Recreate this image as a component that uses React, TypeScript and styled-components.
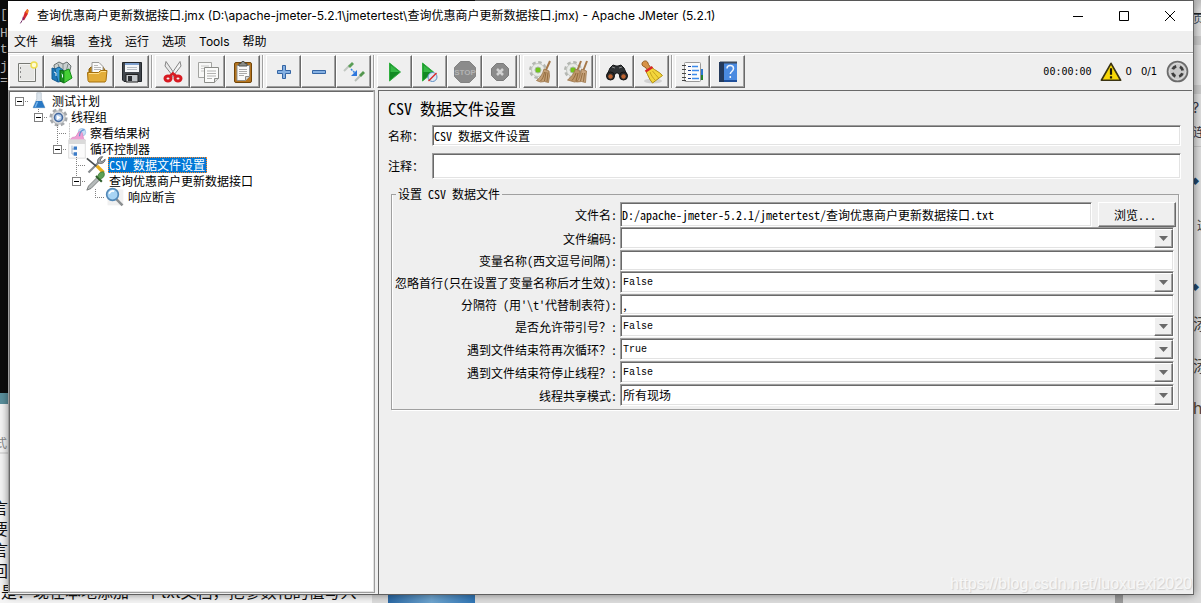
import React from "react";
import styled, { createGlobalStyle, css } from "styled-components";

const SONG = '"Noto Sans Mono CJK SC", "Noto Sans CJK SC", "Liberation Mono", monospace';
const MONO = '"Liberation Mono", "Noto Sans CJK SC", monospace';
const UI = 'Inter, "Noto Sans CJK SC", sans-serif';
const FACE = "#efefef";

const GlobalStyle = createGlobalStyle`
  *, *::before, *::after { box-sizing: border-box; }
  body { margin: 0; background: #e4e4e4; }
  button, input, select { font: inherit; color: inherit; margin: 0; border-radius: 0; }
`;

const sunken = css`
  border: 1px solid;
  border-color: #9d9d9d #fff #fff #9d9d9d;
  box-shadow: inset 1px 1px 0 #696969, inset -1px -1px 0 #e3e3e3;
`;
const raised = css`
  border: 1px solid;
  border-color: #fff #696969 #696969 #fff;
  box-shadow: inset -1px -1px 0 #a0a0a0;
`;

/* ---------- desktop ---------- */

const Desktop = styled.div`
  position: relative;
  display: flex;
  min-height: 100vh;
  padding: 1px 7px 8px 8px;
  overflow: hidden;
  background: #e4e4e4;
`;
const Backdrop = styled.div`
  position: absolute;
  inset: 0;
  overflow: hidden;
  background: linear-gradient(#bdbdbd, #dcdcdc 10px, #dcdcdc);
`;
const Pane = styled.div<{ $x: number; $y: number; $w: number; $h: number; $bg: string }>`
  position: absolute;
  left: ${(p) => p.$x}px;
  top: ${(p) => p.$y}px;
  width: ${(p) => p.$w}px;
  height: ${(p) => p.$h}px;
  background: ${(p) => p.$bg};
`;
const Scrap = styled.span<{ $x: number; $y: number; $size?: number; $color?: string; $font?: string }>`
  position: absolute;
  left: ${(p) => p.$x}px;
  top: ${(p) => p.$y}px;
  font: ${(p) => p.$size ?? 16}px / 20px ${(p) => p.$font ?? UI};
  color: ${(p) => p.$color ?? "#111"};
  white-space: nowrap;
`;

/* ---------- window ---------- */

const Window = styled.main`
  position: relative;
  flex: 1;
  min-width: 0;
  display: flex;
  flex-direction: column;
  background: ${FACE};
  border-right: 1px solid #6a6a6a;
  border-bottom: 1px solid #5f5f5f;
  box-shadow: 0 0 8px rgba(0, 0, 0, 0.45);
`;
const TitleBar = styled.header`
  display: flex;
  align-items: center;
  height: 30px;
  padding-left: 8px;
  background: #fff;
  font: 12px/30px ${UI};
  color: #000;
`;
const TitleText = styled.h1`
  flex: 1;
  margin: 0 0 0 6px;
  font: inherit;
  white-space: nowrap;
`;
const CaptionButton = styled.button`
  display: flex;
  align-items: center;
  justify-content: center;
  width: 46px;
  height: 30px;
  padding: 0;
  border: 0;
  background: transparent;
`;
const MenuBar = styled.nav`
  display: flex;
  gap: 13px;
  height: 22px;
  padding-left: 6px;
  border-bottom: 1px solid #a0a0a0;
`;
const MenuItem = styled.button`
  padding: 0;
  border: 0;
  background: transparent;
  font: 12px/20px ${UI};
  color: #000;
`;
const Toolbar = styled.div`
  display: flex;
  align-items: center;
  height: 36px;
  padding-left: 1px;
  border-top: 1px solid #fff;
`;
const ToolGroup = styled.div`
  display: flex;
  & + & {
    margin-left: 2px;
    padding-left: 3px;
    border-left: 1px solid #a0a0a0;
    box-shadow: inset 1px 0 0 #fff;
  }
`;
const ToolButton = styled.button`
  display: flex;
  align-items: center;
  justify-content: center;
  width: 35px;
  height: 33px;
  padding: 0;
  background: ${FACE};
  ${raised}
`;
const Status = styled.div`
  display: flex;
  align-items: center;
  margin-left: auto;
  padding-right: 4px;
  font: 10px/16px "DejaVu Sans", sans-serif;
  color: #000;
`;
const Clock = styled.span`
  margin-right: 8px;
  font: 10px/16px "DejaVu Sans Mono", monospace;
`;
const Count = styled.span`
  margin-left: 4px;
`;
const Ratio = styled.span`
  margin: 0 9px;
`;

const Body = styled.div`
  flex: 1;
  display: flex;
  min-height: 0;
  padding: 1px 1px 0 0;
`;
const TreePane = styled.section`
  width: 367px;
  flex: none;
  margin: 0 3px 1px 0;
  padding: 1px 0 0 0;
  background: #fff;
  border: 2px solid;
  border-color: #696969 #e3e3e3 #e3e3e3 #696969;
  outline: 1px solid #9d9d9d;
  outline-offset: -1px;
`;
const Editor = styled.section`
  flex: 1;
  min-width: 0;
  padding: 7px 11px 8px 9px;
  border-left: 1px solid #696969;
  border-top: 1px solid #696969;
  font: 12px/16px ${SONG};
  color: #000;
`;

/* ---------- tree ---------- */

const TreeRow = styled.div`
  display: flex;
  align-items: center;
  height: 16px;
`;
const Guide = styled.svg`
  display: block;
  flex: none;
  width: 19px;
  height: 16px;
  shape-rendering: crispEdges;
`;
const Toggle = styled.button`
  display: block;
  flex: none;
  width: 19px;
  height: 16px;
  padding: 0;
  border: 0;
  background: transparent;
`;
const NodeIcon = styled.span`
  display: flex;
  align-items: center;
  justify-content: center;
  flex: none;
  width: 20px;
  height: 16px;
  margin-right: 2px;
`;
const NodeLabel = styled.span<{ $selected?: boolean }>`
  padding: 0 2px 0 1px;
  font: 12px/16px ${SONG};
  white-space: nowrap;
  color: ${(p) => (p.$selected ? "#fff" : "#000")};
  background: ${(p) => (p.$selected ? "#0078d7" : "transparent")};
  outline: ${(p) => (p.$selected ? "1px dotted #ff8728" : "none")};
  outline-offset: -1px;
`;

/* ---------- form ---------- */

const Heading = styled.h2`
  margin: 0 0 7px;
  font: 16px/20px ${SONG};
`;
const TopRow = styled.div<{ $h: number }>`
  display: flex;
  align-items: center;
  height: ${(p) => p.$h}px;
  margin-bottom: 7px;
  label { width: 44px; flex: none; }
`;
const TextInput = styled.input`
  flex: 1;
  min-width: 0;
  height: 100%;
  padding: 0 1px;
  background: #fff;
  outline: none;
  ${sunken}
`;
const Group = styled.fieldset`
  margin: 0 2px 0 3px;
  padding: 0 4px 2px 3px;
  min-width: 0;
  border: 1px solid #a0a0a0;
  box-shadow: 1px 1px 0 #fff, inset 1px 0 0 #fff;
  legend { margin-left: 1px; padding: 0 2px; line-height: 16px; }
`;
const Row = styled.div<{ $h: number }>`
  display: flex;
  align-items: center;
  height: ${(p) => p.$h}px;
  & > label {
    flex: none;
    width: 222px;
    margin-right: 3px;
    text-align: right;
    white-space: nowrap;
  }
`;
const BrowseButton = styled.button`
  width: 78px;
  height: 25px;
  margin: 0 -2px 0 6px;
  padding: 0 4px 0 0;
  background: ${FACE};
  ${raised}
`;
const ComboBox = styled.div`
  position: relative;
  flex: 1;
  height: 22px;
  align-self: flex-start;
`;
const ComboSelect = styled.select<{ $latin?: boolean }>`
  appearance: none;
  width: 100%;
  height: 100%;
  padding: ${(p) => (p.$latin ? 2 : 0)}px 24px 0 2px;
  background: #fff;
  outline: none;
  font: ${(p) => (p.$latin ? `10px/16px ${MONO}` : `12px/16px ${SONG}`)};
  ${sunken}
`;
const ComboArrow = styled.span`
  position: absolute;
  top: 2px;
  right: 1px;
  bottom: 1px;
  width: 19px;
  display: flex;
  align-items: center;
  justify-content: center;
  background: ${FACE};
  pointer-events: none;
  ${raised}
`;
const Watermark = styled.div`
  position: absolute;
  right: 1px;
  bottom: 0;
  font: 16px/20px "Liberation Sans", sans-serif;
  color: #f7f7f7;
  text-shadow: 1px 1px 1px #cfcfcf;
`;

/* ---------- icons ---------- */

const Svg = ({ s = 24, children }: { s?: number; children: React.ReactNode }) => (
  <svg width={s} height={s} viewBox="0 0 24 24" fill="none" aria-hidden="true">
    {children}
  </svg>
);

const NewIcon = () => (
  <Svg>
    <path d="M3.500 3.500h17v18h-17z" fill="#f3f3f1" stroke="#777974" />
    <path d="M5 5h14v15H5z" fill="#e6e6e4" />
    <path d="M5.500 7v2M5.500 11v2M5.500 16v2" stroke="#888" />
    <circle cx="19" cy="5" r="3" fill="#fffbd0" stroke="#eddc50" strokeWidth="1.500" />
  </Svg>
);
const TemplatesIcon = () => (
  <Svg>
    <path d="M4 5l5-3 4 2 4-2 4 4-2 8H5z" fill="#c9d0d0" stroke="#687070" />
    <path d="M8 4l3 8M13 4v8M18 4l-2 8" stroke="#7e8888" />
    <path d="M2 8l6 2v12l-6-3z" fill="#1d78b8" stroke="#145a90" />
    <path d="M5 9l4-2 4 3v11l-5 1z" fill="#3597d3" stroke="#145a90" />
    <path d="M10 10l4 1v12l-4-2z" fill="#1b8e22" stroke="#0d6414" />
    <path d="M14 11l5-2 3 9-8 5z" fill="#45cf35" stroke="#168a1b" />
    <path d="M4 12l2 1v3M11.500 14l1 .5v3" stroke="#e8f6ff" />
  </Svg>
);
const OpenIcon = () => (
  <Svg>
    <path d="M4 20V9l2-2h12l2 3v10z" fill="#b98013" stroke="#8b5f0c" />
    <path d="M7 14V2.500h7l4 4V14z" fill="#fafafa" stroke="#9a9a98" />
    <path d="M9 5.500h4M9 7.500h7M9 9.500h7" stroke="#b8b8b8" />
    <path d="M2.500 12.500h11l2-2h6.500l-1 10-1 1.500H4l-1-1.500z" fill="#e3ad38" stroke="#a5700d" />
    <path d="M4 13.500h10l2-2h5" stroke="#ffdf8a" />
  </Svg>
);
const SaveIcon = () => (
  <Svg>
    <path d="M2.500 2.500h19v19H4l-1.500-1.500z" fill="#41464c" stroke="#23272b" />
    <path d="M5 3h14v9H5z" fill="#f4f6f8" />
    <path d="M5 3h14v2H5z" fill="#7d9fce" />
    <path d="M7 7.500h10M7 9.500h10" stroke="#b6bcc4" />
    <path d="M6 14.500h12V22H6z" fill="#c4c8cb" stroke="#202020" />
    <path d="M8 16h4v5H8z" fill="#2b2e32" />
  </Svg>
);
const CutIcon = () => (
  <Svg>
    <path d="M5 1.500L15 16l-2 1.500L4 6z" fill="#e9e9e9" stroke="#858585" />
    <path d="M19 1.500L9 16l2 1.500L20 6z" fill="#f4f4f4" stroke="#858585" />
    <ellipse cx="7" cy="18.500" rx="3" ry="2.500" stroke="#d81a22" strokeWidth="3" />
    <ellipse cx="17" cy="18.500" rx="3" ry="2.500" stroke="#d81a22" strokeWidth="3" />
    <path d="M9 16l3-2.500 3 2.500" stroke="#d81a22" strokeWidth="2.500" />
  </Svg>
);
const CopyIcon = () => (
  <Svg>
    <path d="M2.500 2.500h13v15h-13z" fill="#f8f8f7" stroke="#a2a3a0" />
    <path d="M5 6h8M5 8.500h8M5 11h8" stroke="#c6c6c4" />
    <path d="M8.500 7.500h14v11l-4 4h-10z" fill="#fbfbfa" stroke="#8b8c88" />
    <path d="M11 11h9M11 13.500h9M11 16h9M11 18.500h5" stroke="#b2b2b0" />
    <path d="M22.500 18.500h-4v4" fill="#ddd" stroke="#8b8c88" />
  </Svg>
);
const PasteIcon = () => (
  <Svg>
    <rect x="3.500" y="2.500" width="17" height="20" rx="1.500" fill="#b4741f" stroke="#714509" />
    <path d="M6 5.500h12.500v11l-4 4H6z" fill="#fafafa" stroke="#92928e" />
    <path d="M8 9.500h8M8 11.500h8M8 13.500h8M8 15.500h5" stroke="#aaa" />
    <path d="M8 6V3.500h2L11 1.500h2l1 2h2V6z" fill="#8b8d88" stroke="#4f514d" />
    <path d="M18.500 16.500h-4v4" fill="#d8d8d8" stroke="#8a8a88" />
  </Svg>
);
const PlusIcon = () => (
  <Svg>
    <path d="M10.500 5.500h3v5h5v3h-5v5h-3v-5h-5v-3h5z" fill="#85b0e2" stroke="#3465a4" />
  </Svg>
);
const MinusIcon = () => (
  <Svg>
    <path d="M5.500 10.500h13v3h-13z" fill="#85b0e2" stroke="#3465a4" />
  </Svg>
);
const ToggleIcon = () => (
  <Svg>
    <path d="M2 11l6-6" stroke="#c2c8c2" strokeWidth="2" />
    <path d="M6 6l4-4 2 2-4 4z" fill="#5a9e56" />
    <path d="M13 21l6-6" stroke="#b8beb8" strokeWidth="2" />
    <path d="M17 15l4-4 2 2-4 4z" fill="#54974f" />
    <path d="M9 9l4 4" stroke="#3886e4" strokeWidth="1.500" strokeDasharray="2 1" />
    <path d="M15 10v6H9z" fill="#2f78dd" />
  </Svg>
);
const StartIcon = () => (
  <Svg>
    <path d="M6.500 3l11 9-11 9z" fill="#128a24" stroke="#2fae3e" />
    <path d="M7.500 5l9 7h-9z" fill="#35b845" />
  </Svg>
);
const NoPauseIcon = () => (
  <Svg>
    <path d="M4.500 3l11 9-11 9z" fill="#128a24" stroke="#2fae3e" />
    <path d="M5.500 5l9 7h-9z" fill="#35b845" />
    <circle cx="14.500" cy="17" r="4.500" fill="#dde8f4" stroke="#5d8fc4" />
    <path d="M10.500 21l8-8" stroke="#dc2a2a" strokeWidth="1.500" />
  </Svg>
);
const StopIcon = () => (
  <Svg>
    <path d="M7.500 1.500h9l6 6v9l-6 6h-9l-6-6v-9z" fill="#8b8b8b" stroke="#828282" />
    <text x="12" y="15" textAnchor="middle" fontFamily="Liberation Sans, sans-serif" fontSize="8" fontWeight="700" fill="#b4b4b4">
      STOP
    </text>
  </Svg>
);
const ShutdownIcon = () => (
  <Svg>
    <path d="M8.500 3.500h7l5 5v7l-5 5h-7l-5-5v-7z" fill="#8b8b8b" stroke="#7b7b7b" />
    <path d="M9 9l6 6M15 9l-6 6" stroke="#d2d2d2" strokeWidth="2.500" />
  </Svg>
);
const Gear = () => (
  <>
    <circle cx="9" cy="10" r="7.500" stroke="#b4b7b2" strokeWidth="3" strokeDasharray="3.400 2.490" />
    <circle cx="9" cy="10" r="6.500" fill="#e9ebe8" stroke="#c4c7c2" />
    <circle cx="9" cy="10" r="3" fill="#72c51d" stroke="#a9b8a0" />
  </>
);
const ClearIcon = () => (
  <Svg>
    <Gear />
    <path d="M21 1l-4 9" stroke="#a5784a" strokeWidth="2" />
    <path d="M15 9l5 2 .5 5-1 6.500-4-1-4 .5-4-1.500c4-3 6-6 7.500-11.500z" fill="#c39f76" stroke="#9b7448" strokeWidth=".8" />
    <path d="M15.500 12c-.5 4-2 7-4 9M17 12l-1.500 9M19 12.500l-1 9" stroke="#86602f" strokeWidth=".8" />
  </Svg>
);
const ClearAllIcon = () => (
  <Svg>
    <Gear />
    <path d="M17 1l-3.500 9M23 1l-3.500 9" stroke="#a5784a" strokeWidth="2" />
    <path d="M11.500 9l4.500 2-.5 10-5 1-7-2c4-3 6-6 8-11z" fill="#bd966a" stroke="#9b7448" strokeWidth=".8" />
    <path d="M17.500 9l5 2-.5 5-.5 6.500-4-1-5 .5c3-3 4-7 5-13z" fill="#c8a580" stroke="#9b7448" strokeWidth=".8" />
    <path d="M12 13c-1 3-2 5-4 7.500M14 13l-2 8M18.500 13l-2 8M20.500 13l-1 8.500" stroke="#86602f" strokeWidth=".8" />
  </Svg>
);
const SearchIcon = () => (
  <Svg>
    <path d="M5 8l3-3 3 1h2l3-1 3 3 3 7-5 3-4-5h-2l-4 5-5-3z" fill="#2f3234" stroke="#17191a" />
    <path d="M7 7l3 1M17 7l-3 1" stroke="#888" />
    <circle cx="5.500" cy="16" r="4" fill="#292b2c" stroke="#121212" />
    <circle cx="18.500" cy="16" r="4" fill="#292b2c" stroke="#121212" />
    <circle cx="5.500" cy="16.500" r="2.200" fill="#bd6330" />
    <circle cx="18.500" cy="16.500" r="2.200" fill="#bd6330" />
  </Svg>
);
const BroomIcon = () => (
  <Svg>
    <ellipse cx="13" cy="21" rx="9" ry="2.500" fill="#d2d2d2" />
    <path d="M2 4c0-3 4-4 5.500-2l1 2.500L11 8l-3.500 2L5 7C3 6.500 2 5.500 2 4z" fill="#d79347" stroke="#946021" />
    <path d="M12 7.500c3 3 7 4 10.500 8l-10 7.500C9 19 8 15 6 11.500z" fill="#f3d63c" stroke="#b08e12" />
    <path d="M10 12c1 3 3 6 5 8M12.500 11c2 2 4 5 6 7" stroke="#c6a31f" />
    <path d="M5.500 11.500l7-4.500" stroke="#d72828" strokeWidth="2.500" />
  </Svg>
);
const HelperIcon = () => (
  <Svg>
    <path d="M19 9h3v6h-3z" fill="#2a78d0" />
    <path d="M19 15h3v5h-3z" fill="#22812c" />
    <rect x="3.500" y="2.500" width="16" height="19" rx="1" fill="#fbfbfb" stroke="#999" />
    <path d="M1 5.500h4M1 9.500h4M1 13.500h4M1 17.500h4M1 20.500h4" stroke="#444" />
    <path d="M7 6.500h3M7 10.500h3M7 14.500h3M7 18.500h3" stroke="#1d3e8c" />
    <path d="M11 6.500h6M11 10.500h7M11 14.500h5M11 18.500h7" stroke="#3a8aec" strokeWidth="1.500" />
  </Svg>
);
const HelpIcon = () => (
  <Svg>
    <path d="M3 2h18v20H3z" fill="#4a8ae0" />
    <path d="M4 1.500h17v2H4z" fill="#3d4a5c" />
    <path d="M3 2h5v20H3z" fill="#243a5c" />
    <path d="M8 21h13" stroke="#1f4f9a" strokeWidth="2" />
    <path d="M11 8.500c0-4 6.500-4 6.500 0 0 3-3.200 3-3.200 5.500M14.300 16v2" stroke="#eef5ff" strokeWidth="1.500" />
  </Svg>
);
const WarningIcon = () => (
  <Svg s={22}>
    <path d="M12 2.500L22.500 21h-21z" fill="#f8d808" stroke="#3b3412" strokeWidth="1.800" strokeLinejoin="round" />
    <path d="M12 8v7M12 16.500V19" stroke="#1c1a0a" strokeWidth="2.400" />
  </Svg>
);
const ThreadsIcon = () => (
  <Svg s={23}>
    <circle cx="12" cy="12" r="10.500" fill="#adadad" stroke="#6a6a6a" strokeWidth="1.600" />
    <circle cx="12" cy="12" r="8.500" fill="#c9c9c9" stroke="#dedede" />
    <circle cx="12" cy="12" r="5.500" stroke="#3e3e3e" strokeWidth="3" strokeDasharray="4.600 4.040" strokeDashoffset="-2" />
  </Svg>
);
const FeatherIcon = () => (
  <Svg s={15}>
    <path d="M10 17L14 5l4-5 2 2-1 6-6 10z" fill="#d7262c" />
    <path d="M15 5l3-5 2 2-1 6z" fill="#ef7a22" />
    <path d="M10 17l1-5 3 3-2 3z" fill="#8b2568" />
    <path d="M10 18l-3 5" stroke="#6b2360" strokeWidth="1.500" />
  </Svg>
);

const FlaskIcon = () => (
  <Svg s={18}>
    <path d="M9 1h6v8l5 12H4L9 9z" fill="#dbe4ec" stroke="#b5c0cb" />
    <path d="M8 12h8l4 9H4z" fill="#2878c4" />
    <path d="M10 13l-3 7" stroke="#76b4ec" strokeWidth="2" />
  </Svg>
);
const GearIcon = () => (
  <Svg s={19}>
    <circle cx="12" cy="12" r="9.500" stroke="#a5a8ab" strokeWidth="4" strokeDasharray="4.500 2.960" />
    <circle cx="12" cy="12" r="8.500" fill="#d6d8da" stroke="#aaadb0" />
    <circle cx="12" cy="12" r="5" fill="#b7d0ef" stroke="#44699f" strokeWidth="2" />
    <path d="M10 9l5 3-5 3z" fill="#fff" />
  </Svg>
);
const ResultsIcon = () => (
  <Svg s={20}>
    <path d="M3 0v21h18" stroke="#bbb" strokeDasharray="2 1" />
    <circle cx="18" cy="11" r="4.500" fill="#c9dff5" stroke="#9fc0e6" />
    <path d="M4 21c2-7 5-1 8-7s6-5 7 1 2 4 3 6z" fill="#ef9fd4" stroke="#d987c0" />
    <path d="M15 16c0-5 3-8 6-8" stroke="#5b93d4" strokeWidth="1.500" />
  </Svg>
);
const LoopIcon = () => (
  <Svg s={20}>
    <path d="M2 1h20v22H2z" fill="#fbfbfb" stroke="#d8d8d8" />
    <path d="M2 1h20v5H2z" fill="#dadada" />
    <path d="M6 8v10h3M6 12h3" stroke="#8fa6c4" />
    <path d="M8 9h4v4H8zM8 16h4v4H8z" fill="#3a7bc8" />
  </Svg>
);
const ToolsIcon = () => (
  <Svg s={20}>
    <path d="M3 21L16 8" stroke="#85898c" strokeWidth="2.500" />
    <path d="M14 9c-1-4 2-7 6-7l-3 4 2 2 4-3c0 4-4 6-7 5z" fill="#9ca0a3" stroke="#5a5e62" />
    <path d="M1 4l12 10" stroke="#4a4e50" strokeWidth="2" />
    <path d="M13 13l8 8" stroke="#e9ae1c" strokeWidth="4" />
  </Svg>
);
const SamplerIcon = () => (
  <Svg s={20}>
    <path d="M1 23l2-5L13 8l3 3L6 21z" fill="#b5baba" stroke="#6c7070" />
    <path d="M12 6l7 7" stroke="#2c5c2a" strokeWidth="2.500" />
    <path d="M14 7c1-5 4-6 7-6 2 3 1 7-4 9z" fill="#5ea154" stroke="#39732f" />
  </Svg>
);
const AssertIcon = () => (
  <Svg s={20}>
    <path d="M3 3h19v19H3z" fill="#f0f0f0" />
    <path d="M13 14l8 8" stroke="#8a8e90" strokeWidth="3" />
    <circle cx="9" cy="9" r="7" fill="#a8d4f4" stroke="#5389b8" strokeWidth="2" />
    <path d="M5 8c1-3 4-4 6-3" stroke="#fff" strokeWidth="2" />
  </Svg>
);

/* ---------- data ---------- */

type Kind = "blank" | "tee" | "end" | "open";
interface TreeItem {
  label: string;
  guides: Kind[];
  icon: React.ReactNode;
  selected?: boolean;
}

const TREE: TreeItem[] = [
  { label: "测试计划", guides: ["open"], icon: <FlaskIcon /> },
  { label: "线程组", guides: ["blank", "open"], icon: <GearIcon /> },
  { label: "察看结果树", guides: ["blank", "blank", "tee"], icon: <ResultsIcon /> },
  { label: "循环控制器", guides: ["blank", "blank", "open"], icon: <LoopIcon /> },
  { label: "CSV 数据文件设置", guides: ["blank", "blank", "blank", "tee"], icon: <ToolsIcon />, selected: true },
  { label: "查询优惠商户更新数据接口", guides: ["blank", "blank", "blank", "open"], icon: <SamplerIcon /> },
  { label: "响应断言", guides: ["blank", "blank", "blank", "blank", "end"], icon: <AssertIcon /> },
];

const TOOLS: [string, () => React.JSX.Element][][] = [
  [["新建", NewIcon], ["模板", TemplatesIcon], ["打开", OpenIcon], ["保存", SaveIcon]],
  [["剪切", CutIcon], ["复制", CopyIcon], ["粘贴", PasteIcon]],
  [["展开", PlusIcon], ["折叠", MinusIcon], ["切换", ToggleIcon]],
  [["启动", StartIcon], ["不停顿开始", NoPauseIcon], ["停止", StopIcon], ["关闭", ShutdownIcon]],
  [["清除", ClearIcon], ["清除全部", ClearAllIcon]],
  [["查找", SearchIcon], ["重置查找", BroomIcon]],
  [["函数助手", HelperIcon], ["帮助", HelpIcon]],
];

const GuideCell = ({ kind, first }: { kind: Kind; first: boolean }) => {
  const dots = { stroke: "#808080", strokeDasharray: "1 1" };
  if (kind === "open")
    return (
      <Toggle aria-label="折叠节点">
        <Guide viewBox="0 0 19 16" fill="none">
          {!first && <path d="M9.500 0V4" {...dots} />}
          <path d="M15 8.500h4" {...dots} />
          <path d="M5.500 4.500h8v8h-8z" fill="#fff" stroke="#808080" />
          <path d="M7 8.500h5" stroke="#000" />
        </Guide>
      </Toggle>
    );
  return (
    <Guide viewBox="0 0 19 16" fill="none" aria-hidden="true">
      {kind === "tee" && <path d="M9.500 0v16" {...dots} />}
      {kind === "end" && <path d="M9.500 0v8" {...dots} />}
      {kind !== "blank" && <path d="M9 8.500h10" {...dots} />}
    </Guide>
  );
};

const Combo = ({ id, label, value, latin }: { id: string; label: string; value: string; latin?: boolean }) => (
  <Row $h={23}>
    <label htmlFor={id}>{label}</label>
    <ComboBox>
      <ComboSelect id={id} $latin={latin} defaultValue={value}>
        <option value={value}>{value}</option>
      </ComboSelect>
      <ComboArrow>
        <svg width="9" height="5" viewBox="0 0 9 5" aria-hidden="true">
          <path d="M0 0h9L4.500 5z" fill="#696969" />
        </svg>
      </ComboArrow>
    </ComboBox>
  </Row>
);

const Field = ({ id, label, value }: { id: string; label: string; value: string }) => (
  <Row $h={21}>
    <label htmlFor={id}>{label}</label>
    <TextInput id={id} defaultValue={value} />
  </Row>
);

export default function App() {
  return (
    <>
      <GlobalStyle />
      <Desktop>
        <Backdrop aria-hidden="true">
          <Pane $x={0} $y={0} $w={475} $h={394} $bg="#0c0c0c" />
          <Pane $x={475} $y={0} $w={719} $h={2} $bg="#6e6e6e" />
          <Pane $x={0} $y={393} $w={9} $h={11} $bg="#5a8f9c" />
          <Pane $x={0} $y={404} $w={372} $h={199} $bg="#f4f4f4" />
          <Pane $x={0} $y={452} $w={9} $h={2} $bg="#dcdcdc" />
          <Pane $x={388} $y={594} $w={87} $h={9} $bg="linear-gradient(90deg,#2a68a4,#6fa5cf 50%,#2f74b4)" />
          <Pane $x={1115} $y={594} $w={8} $h={9} $bg="#9a9a9a" />
          <Pane $x={1193} $y={13} $w={8} $h={1} $bg="#222" />
          <Pane $x={1193} $y={36} $w={8} $h={9} $bg="#c8c8c8" />
          <Pane $x={1193} $y={85} $w={8} $h={9} $bg="#c8c8c8" />
          <Pane $x={1193} $y={146} $w={8} $h={1} $bg="#c4c4c4" />
          <Scrap $x={0} $y={5} $size={13} $color="#bbb" $font={MONO}>[</Scrap>
          <Scrap $x={0} $y={24} $size={13} $color="#bbb" $font={MONO}>H</Scrap>
          <Scrap $x={0} $y={40} $size={13} $color="#bbb" $font={MONO}>t</Scrap>
          <Scrap $x={0} $y={57} $size={13} $color="#bbb" $font={MONO}>j</Scrap>
          <Scrap $x={0} $y={71} $size={13} $color="#bbb" $font={MONO}>=</Scrap>
          <Scrap $x={-5} $y={434} $size={12} $color="#888">式</Scrap>
          <Scrap $x={-8} $y={498}>言</Scrap>
          <Scrap $x={-8} $y={519}>要</Scrap>
          <Scrap $x={-8} $y={540}>言</Scrap>
          <Scrap $x={-8} $y={561}>回</Scrap>
          <Scrap $x={1} $y={582}>是：现在本地添加一个txt文档，把参数化的值写入</Scrap>
          <Scrap $x={1193} $y={9} $size={11} $color="#345">页</Scrap>
          <Scrap $x={1192} $y={98} $size={14} $color="#334">?</Scrap>
          <Scrap $x={1193} $y={123} $size={12} $color="#334">连</Scrap>
          <Scrap $x={1191} $y={171} $size={8} $color="#246">◆</Scrap>
          <Scrap $x={1197} $y={216} $size={12} $color="#444">这</Scrap>
          <Scrap $x={1191} $y={277} $size={8} $color="#246">◆</Scrap>
          <Scrap $x={1193} $y={314} $color="#444">添</Scrap>
          <Scrap $x={1193} $y={356} $color="#444">添</Scrap>
          <Scrap $x={1193} $y={398} $color="#543">h</Scrap>
        </Backdrop>

        <Window>
          <TitleBar>
            <FeatherIcon />
            <TitleText>查询优惠商户更新数据接口.jmx (D:\apache-jmeter-5.2.1\jmetertest\查询优惠商户更新数据接口.jmx) - Apache JMeter (5.2.1)</TitleText>
            <CaptionButton aria-label="最小化">
              <svg width="10" height="10" viewBox="0 0 10 10"><path d="M0 5.500h10" stroke="#000" /></svg>
            </CaptionButton>
            <CaptionButton aria-label="最大化">
              <svg width="10" height="10" viewBox="0 0 10 10"><path d="M.5.500h9v9h-9z" fill="none" stroke="#000" /></svg>
            </CaptionButton>
            <CaptionButton aria-label="关闭窗口">
              <svg width="10" height="10" viewBox="0 0 10 10"><path d="M0 0l10 10M10 0L0 10" stroke="#000" /></svg>
            </CaptionButton>
          </TitleBar>

          <MenuBar>
            {["文件", "编辑", "查找", "运行", "选项", "Tools", "帮助"].map((m) => (
              <MenuItem key={m}>{m}</MenuItem>
            ))}
          </MenuBar>

          <Toolbar>
            {TOOLS.map((group, i) => (
              <ToolGroup key={i}>
                {group.map(([name, Icon]) => (
                  <ToolButton key={name} aria-label={name}>
                    <Icon />
                  </ToolButton>
                ))}
              </ToolGroup>
            ))}
            <Status>
              <Clock>00:00:00</Clock>
              <WarningIcon />
              <Count>0</Count>
              <Ratio>0/1</Ratio>
              <ThreadsIcon />
            </Status>
          </Toolbar>

          <Body>
            <TreePane>
              {TREE.map((item) => (
                <TreeRow key={item.label}>
                  {item.guides.map((kind, i) => (
                    <GuideCell key={i} kind={kind} first={i === 0} />
                  ))}
                  <NodeIcon>{item.icon}</NodeIcon>
                  <NodeLabel $selected={item.selected}>{item.label}</NodeLabel>
                </TreeRow>
              ))}
            </TreePane>

            <Editor>
              <Heading>CSV 数据文件设置</Heading>
              <TopRow $h={21}>
                <label htmlFor="name">名称：</label>
                <TextInput id="name" defaultValue="CSV 数据文件设置" />
              </TopRow>
              <TopRow $h={26}>
                <label htmlFor="comment">注释：</label>
                <TextInput id="comment" />
              </TopRow>
              <Group>
                <legend>设置 CSV 数据文件</legend>
                <Row $h={25}>
                  <label htmlFor="file">文件名:</label>
                  <TextInput id="file" defaultValue="D:/apache-jmeter-5.2.1/jmetertest/查询优惠商户更新数据接口.txt" />
                  <BrowseButton>浏览...</BrowseButton>
                </Row>
                <Combo id="encoding" label="文件编码:" value="" />
                <Field id="vars" label="变量名称(西文逗号间隔):" value="" />
                <Combo id="ignore" label="忽略首行(只在设置了变量名称后才生效):" value="False" latin />
                <Field id="delim" label="分隔符 (用'\t'代替制表符):" value="," />
                <Combo id="quoted" label="是否允许带引号？:" value="False" latin />
                <Combo id="recycle" label="遇到文件结束符再次循环？:" value="True" latin />
                <Combo id="stop" label="遇到文件结束符停止线程？:" value="False" latin />
                <Combo id="share" label="线程共享模式:" value="所有现场" />
              </Group>
            </Editor>
          </Body>
          <Watermark>https://blog.csdn.net/luoxuexi2020</Watermark>
        </Window>
      </Desktop>
    </>
  );
}
